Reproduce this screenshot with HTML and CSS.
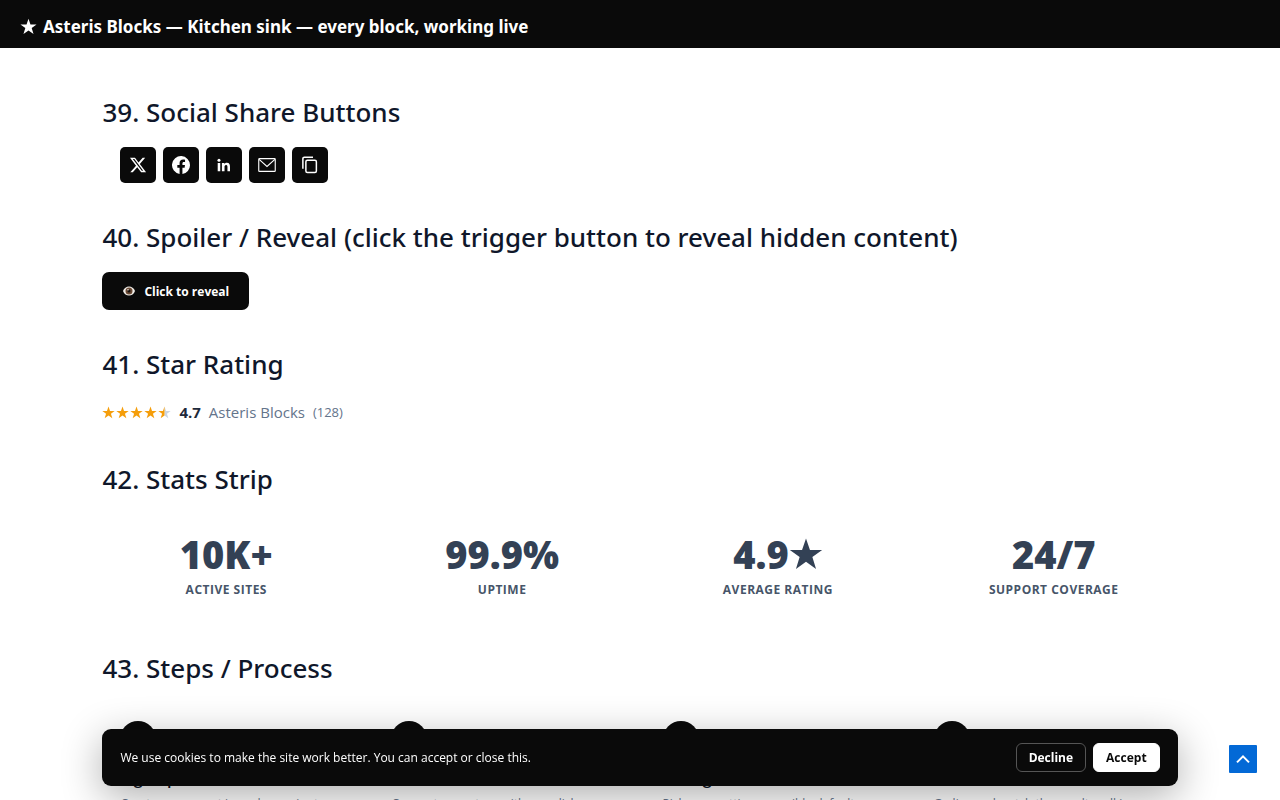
FILE: index.html
```html
<!DOCTYPE html>
<html lang="en">
<head>
<meta charset="utf-8">
<title>Asteris Blocks — Kitchen sink</title>
<link rel="stylesheet" href="styles.css">
</head>
<body>
<header class="topbar">
  <svg class="topbar-star" viewBox="0 0 24 24" aria-hidden="true"><path d="M12 1l2.8 8.1h8.6l-6.9 5.1 2.6 8.3L12 17.5l-7.100 5 2.600-8.300L.6 9.100h8.600z"/></svg>
  <span>Asteris Blocks — Kitchen sink — every block, working live</span>
</header>
<main class="page">
  <section class="block">
    <h2>39. Social Share Buttons</h2>
    <div class="share">
      <button aria-label="Share on X"><svg viewBox="0 0 24 24"><path d="M18.200 2.300h3.400l-7.200 8.200L22.800 21.700h-6.600l-5.200-6.800-6 6.800H1.700l7.700-8.800L1.300 2.300H8l4.700 6.200zm-1.200 17.500h1.900L7.100 4.100h-2z"/></svg></button>
      <button aria-label="Share on Facebook"><svg viewBox="0 0 24 24"><path d="M24 12.100a12 12 0 1 0-13.900 11.900v-8.400H7.100v-3.500h3V9.400c0-3 1.800-4.700 4.600-4.700 1.300 0 2.700.2 2.700.2v3h-1.500c-1.500 0-2 .9-2 1.900v2.300h3.400l-.5 3.500h-2.900V24A12 12 0 0 0 24 12.100z"/></svg></button>
      <button aria-label="Share on LinkedIn"><svg viewBox="0 0 24 24"><circle cx="5.300" cy="5.800" r="2"/><path d="M3.600 9.300H7v11H3.600zM9.200 9.300h3.200v1.500c.5-.9 1.600-1.800 3.400-1.800 3.500 0 4.200 2.300 4.200 5.300v6h-3.400v-5.400c0-1.300 0-2.900-1.800-2.900s-2.100 1.400-2.100 2.800v5.500H9.200z"/></svg></button>
      <button aria-label="Share by email"><svg class="line" viewBox="0 0 24 24"><rect x="1" y="3.500" width="22" height="17" rx="1"/><path d="M1.500 4.500L12 14 22.500 4.500"/></svg></button>
      <button aria-label="Copy link"><svg class="line copy" viewBox="0 0 24 24"><rect x="6.500" y="5.500" width="14" height="16.500" rx="2"/><path d="M2.500 17V3.500a2 2 0 0 1 2-2H16"/></svg></button>
    </div>
  </section>
  <section class="block">
    <h2>40. Spoiler / Reveal (click the trigger button to reveal hidden content)</h2>
    <button class="reveal"><svg viewBox="0 0 24 24" aria-hidden="true"><path class="eye-white" d="M0 12c4-12 20-12 24 0-4 12-20 12-24 0z"/><circle class="eye-iris" cx="12" cy="12" r="7"/><circle class="eye-pupil" cx="12" cy="12" r="3"/><circle class="eye-white" cx="10" cy="9.500" r="1.500"/></svg>Click to reveal</button>
  </section>
  <section class="block">
    <h2>41. Star Rating</h2>
    <div class="rating">
      <span class="stars" role="img" aria-label="4.7 out of 5">
        <svg viewBox="0 0 24 24"><path d="M12 1l2.800 8.100h8.600l-6.900 5.100 2.600 8.300L12 17.500l-7.100 5 2.600-8.300L.6 9.100h8.600z"/></svg>
        <svg viewBox="0 0 24 24"><path d="M12 1l2.800 8.100h8.600l-6.900 5.100 2.600 8.300L12 17.500l-7.100 5 2.600-8.300L.6 9.100h8.600z"/></svg>
        <svg viewBox="0 0 24 24"><path d="M12 1l2.800 8.100h8.600l-6.900 5.100 2.600 8.300L12 17.500l-7.100 5 2.600-8.300L.6 9.100h8.600z"/></svg>
        <svg viewBox="0 0 24 24"><path d="M12 1l2.800 8.100h8.600l-6.900 5.100 2.600 8.300L12 17.500l-7.100 5 2.600-8.300L.6 9.100h8.600z"/></svg>
        <svg viewBox="0 0 24 24"><path class="star-empty" d="M12 1l2.800 8.100h8.600l-6.900 5.100 2.600 8.300L12 17.500z"/><path d="M12 1v16.500l-7.100 5 2.600-8.300L.6 9.100h8.600z"/></svg>
      </span>
      <strong>4.7</strong>
      <span class="rating-name">Asteris Blocks</span>
      <span class="rating-count">(128)</span>
    </div>
  </section>
  <section class="block">
    <h2>42. Stats Strip</h2>
    <div class="stats">
      <div><div class="value">10K+</div><div class="label">Active sites</div></div>
      <div><div class="value">99.9%</div><div class="label">Uptime</div></div>
      <div><div class="value">4.9<svg viewBox="0 0 24 24" role="img" aria-label="star"><path d="M12 1l2.800 8.100h8.600l-6.900 5.100 2.600 8.300L12 17.500l-7.100 5 2.600-8.300L.6 9.100h8.600z"/></svg></div><div class="label">Average rating</div></div>
      <div><div class="value">24/7</div><div class="label">Support coverage</div></div>
    </div>
  </section>
  <section class="block">
    <h2>43. Steps / Process</h2>
    <ol class="steps">
      <li><span class="num"></span><h3>Sign up</h3><p>Create an account in under a minute.</p></li>
      <li><span class="num"></span><h3>Connect</h3><p>Connect your store with one click.</p></li>
      <li><span class="num"></span><h3>Configure</h3><p>Pick your settings, sensible defaults.</p></li>
      <li><span class="num"></span><h3>Launch</h3><p>Go live and watch the results roll in.</p></li>
    </ol>
  </section>
</main>
<aside class="cookie" aria-label="Cookie notice">
  <p>We use cookies to make the site work better. You can accept or close this.</p>
  <div class="cookie-actions"><button class="decline">Decline</button><button class="accept">Accept</button></div>
</aside>
<a class="to-top" href="#" aria-label="Back to top"><svg viewBox="0 0 24 24"><path d="M3 17l9-9 9 9"/></svg></a>
</body>
</html>
```
FILE: styles.css
```css
* { box-sizing: border-box; }
html { overflow: hidden; }
body {
  margin: 0;
  height: 100vh;
  overflow: hidden;
  background: #fff;
  color: #334155;
  font-family: "Segoe UI", "Open Sans", "Noto Sans", sans-serif;
}
button { font-family: inherit; cursor: pointer; }
h2, h3, p, ol { margin: 0; padding: 0; }
.topbar {
  display: flex;
  align-items: center;
  gap: 6px;
  height: 48px;
  padding: 4px 20px 0;
  background: #0a0a0a;
  color: #fff;
  font-family: "Segoe UI", "Noto Sans", "Open Sans", sans-serif;
  font-size: 17px;
  font-weight: 700;
}
.topbar-star { width: 17px; height: 17px; fill: #fff; }
.page { padding: 44px 8% 0; }
.block { padding-bottom: 34px; }
h2 {
  color: #0f172a;
  font-family: "Segoe UI", "Noto Sans", "Open Sans", sans-serif;
  font-size: 26px;
  font-weight: 500;
  line-height: 40px;
  margin-bottom: 15px;
}
.share { display: flex; gap: 7px; padding: 0 18px; }
.share button {
  display: grid;
  place-items: center;
  width: 36px;
  height: 36px;
  padding: 0;
  border: 0;
  border-radius: 5px;
  background: #0a0a0a;
}
.share svg { width: 18px; height: 18px; fill: #fff; }
.share .line { fill: none; stroke: #fff; stroke-width: 1.5; }
.share .copy { stroke-width: 2; }
.reveal {
  display: flex;
  align-items: center;
  gap: 8px;
  height: 38px;
  padding: 0 20px;
  border: 0;
  border-radius: 7px;
  background: #0a0a0a;
  color: #fff;
  font-size: 12px;
  font-weight: 700;
}
.reveal svg { width: 14px; height: 12px; }
.eye-white { fill: #f1eee9; }
.eye-iris { fill: #6b4a35; }
.eye-pupil { fill: #17110d; }
.rating { display: flex; align-items: center; gap: 8px; font-size: 15px; line-height: 26px; }
.stars { display: flex; gap: 1px; }
.stars svg { width: 13px; height: 13px; fill: #f59e0b; }
.stars .star-empty { fill: #cbd5e1; }
.rating strong { color: #1e293b; font-weight: 700; }
.rating-name { color: #64748b; }
.rating-count { color: #64748b; font-size: 13px; }
.stats {
  display: grid;
  grid-template-columns: repeat(4, minmax(0, 1fr));
  gap: 28px;
  padding: 18px 0 16px;
  text-align: center;
}
.value {
  display: flex;
  align-items: center;
  justify-content: center;
  font-size: 38px;
  font-weight: 800;
  line-height: 44px;
}
.value svg { width: 34px; height: 34px; fill: #334155; }
.label {
  margin-top: 6px;
  color: #475569;
  font-size: 12px;
  font-weight: 700;
  line-height: 16px;
  letter-spacing: 0.5px;
  text-transform: uppercase;
}
.steps {
  display: grid;
  grid-template-columns: repeat(4, minmax(0, 1fr));
  gap: 45px;
  padding: 18px;
  list-style: none;
}
.num {
  display: block;
  width: 36px;
  height: 36px;
  border-radius: 50%;
  background: #0a0a0a;
}
.steps h3 { margin-top: 9px; color: #0f172a; font-size: 16px; font-weight: 600; line-height: 24px; }
.steps p { margin-top: 3px; color: #64748b; font-size: 12px; line-height: 22px; white-space: nowrap; }
.cookie {
  position: fixed;
  left: 8%;
  right: 8%;
  bottom: 14px;
  display: flex;
  align-items: center;
  justify-content: space-between;
  padding: 14px 18px;
  border-radius: 9px;
  background: #0a0a0a;
  color: #fff;
  font-size: 12px;
  box-shadow: 0 10px 40px rgba(0, 0, 0, 0.32);
}
.cookie-actions { display: flex; gap: 7px; }
.cookie button {
  height: 29px;
  padding: 0 12px;
  border: 1px solid #555;
  border-radius: 6px;
  background: #0a0a0a;
  color: #fff;
  font-size: 12px;
  font-weight: 700;
}
.cookie .accept { border-color: #fff; background: #fff; color: #0a0a0a; }
.to-top {
  position: fixed;
  right: 23px;
  bottom: 27px;
  display: grid;
  place-items: center;
  width: 28px;
  height: 28px;
  border-radius: 1px;
  background: #0369d6;
}
.to-top svg { width: 16px; height: 16px; fill: none; stroke: #fff; stroke-width: 3; }
```
